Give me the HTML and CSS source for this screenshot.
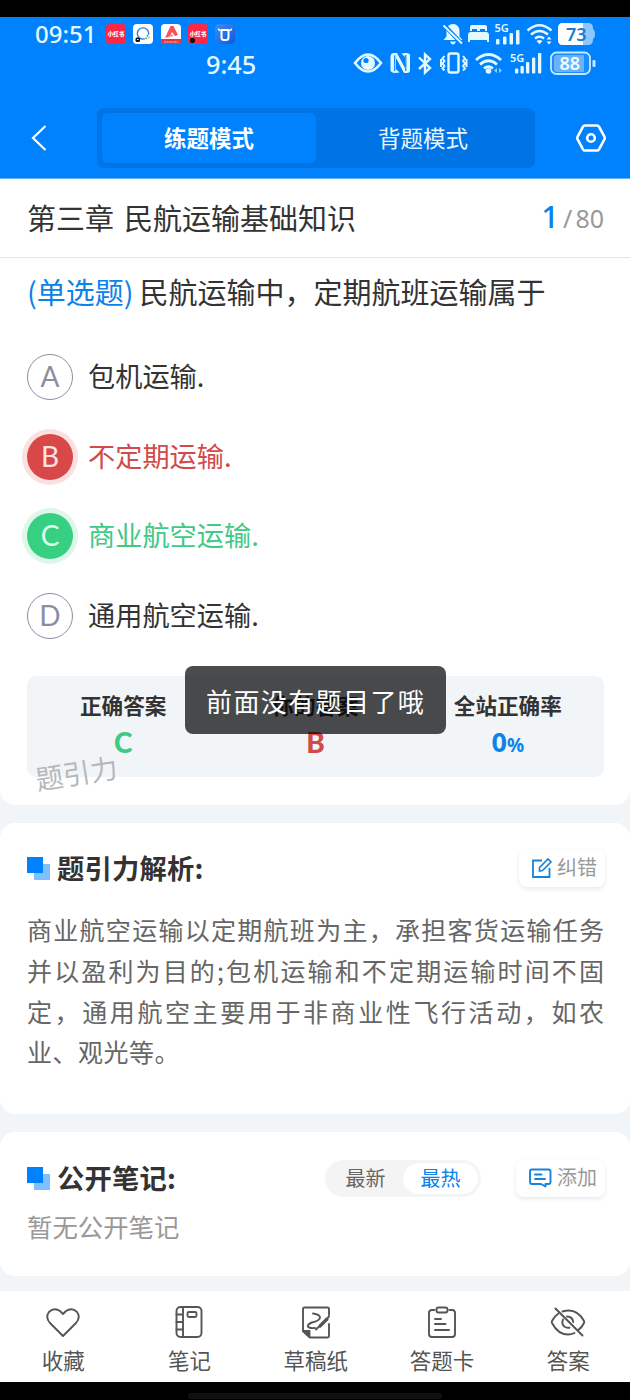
FILE: index.html
```html
<!DOCTYPE html>
<html lang="zh-CN">
<head>
<meta charset="utf-8">
<title>练题模式</title>
<link rel="stylesheet" href="styles.css">
</head>
<body>
<div class="phone">
  <div class="bezel-top"></div>
  <header class="header">
    <div class="status status-outer">
      <span class="clock clock-outer">09:51</span>
      <div class="apps">
        <span class="app app-red">小红书</span>
        <span class="app app-white"><svg width="20" height="20" viewBox="0 0 20 20" fill="none"><circle cx="10" cy="9.500" r="5.700" stroke="#2e7fd0" stroke-width="1.300"/><circle cx="14.500" cy="13.500" r="3" fill="#fff"/><path d="M14.500 11v1.500" stroke="#2e7fd0" stroke-width="1.600"/><path d="M12.500 13.500l1.500 1.500" stroke="#56b553" stroke-width="1.600"/><path d="M15.500 13l1 1" stroke="#f2b630" stroke-width="1.800"/><rect x="2.500" y="13.500" width="4.500" height="4.500" rx="1.500" fill="#111"/><path d="M4 15.500h1.500" stroke="#fff"/></svg></span>
        <span class="app app-white"><svg width="20" height="20" viewBox="0 0 20 20"><path d="M9.500 2h3l4.500 9-3 1-3-4-2 4-5 2z" fill="#f0545c"/><path d="M5 14l6-4 1.500 2z" fill="#f88"/><path d="M0 15h20v2a3 3 0 0 1-3 3H3a3 3 0 0 1-3-3z" fill="#e8333f"/><path d="M3 18h14" stroke="#ffb9bd" stroke-dasharray="2 .5"/></svg></span>
        <span class="app app-red">小红书<i class="badge"></i></span>
        <span class="app app-blue"><svg width="20" height="20" viewBox="0 0 20 20" fill="none" stroke="#fff"><path d="M6.500 6v7.500q0 2.500 2.500 2.500h2q2.500 0 2.500-2.500V6z" stroke-width="2"/><path d="M3.500 4.500q0 2 2 2M16.500 4.500q0 2-2 2" stroke-width="1.500"/></svg></span>
      </div>
      <div class="status-icons">
        <svg width="26" height="33" viewBox="440 17 26 33"><path d="M453 24c-4 0-6.500 3-6.500 7v5.500l-3 3.500h19l-3-3.500V31c0-4-2.500-7-6.500-7zM450 41.500h6q-1 3-3 3t-3-3z" fill="#e4f8ff"/><path d="M444 25l18 19" stroke="#0081fe" stroke-width="4"/><path d="M443.500 25.500l18.500 18" stroke="#e4f8ff" stroke-width="2"/></svg>
        <svg width="26" height="33" viewBox="466 17 26 33" fill="#e4f8ff"><path d="M470 31v-4q0-2 2-2h13q2 0 2 2v4h-2v-2h-5v2h-3v-2h-5v2zM468 42v-7q0-3 3-3h15q3 0 3 3v7h-2v-2h-17v2z"/></svg>
        <svg width="30" height="33" viewBox="492 17 30 33" fill="#e4f8ff"><text class="net" x="494.500" y="32">5G</text><rect x="496" y="39" width="3.500" height="5.500" rx="1"/><rect x="503" y="36.500" width="3.500" height="8" rx="1"/><rect x="509.500" y="33" width="3.500" height="11.500" rx="1"/><rect x="516" y="30" width="3.500" height="14.500" rx="1"/></svg>
        <svg width="33" height="33" viewBox="522 17 33 33" fill="none" stroke="#e4f8ff" stroke-width="2.600"><path d="M527.500 30.500q12-10.500 24 0M531 34.500q8.500-7 17 0M535 38.500q4.500-3.500 9 0"/><path d="M536.500 41l3 3.300 3-3.300q-3-2-6 0z" fill="#e4f8ff" stroke="none"/><path d="M546.500 39.500h5l-2.500-3zM546.500 41.500h5l-2.500 3z" fill="#e4f8ff" stroke="none"/></svg>
        <svg width="42" height="33" viewBox="555 17 42 33"><path d="M563 23h25q5 0 5 5v1q2 1 2 5t-2 5v1q0 5-5 5h-25q-5 0-5-5V28q0-5 5-5z" fill="#8cc7ff"/><path d="M563 23h20v22h-20q-5 0-5-5V28q0-5 5-5z" fill="#fff"/><text class="level" x="566" y="40.500" fill="#1c7bd5">73</text></svg>
      </div>
    </div>
    <div class="status status-inner">
      <span class="clock clock-inner">9:45</span>
      <div class="status-icons">
        <svg width="36" height="28" viewBox="350 50 36 28"><path d="M355 63q13-17 26 0-13 17-26 0z" fill="none" stroke="#e4f8ff" stroke-width="2.600"/><circle cx="368" cy="63" r="7" fill="#e4f8ff"/><circle cx="366" cy="60.500" r="2.600" fill="#0081fe"/></svg>
        <svg width="28" height="28" viewBox="386 50 28 28"><path d="M394 53h3l8 15V57l-3.500-3.500q6-1 8 .5 1 1 .5 3v13q0 3-3 3h-3l-8-15v11l3.500 3.500q-6 1-8-.5-1.500-1-1-3V57q0-4 3.500-4z" fill="#e4f8ff"/><path d="M394.700 55.500v15.500M405.800 55v16" stroke="#0081fe" stroke-width="1.200"/></svg>
        <svg width="22" height="28" viewBox="414 50 22 28" fill="none" stroke="#e4f8ff" stroke-width="2.400"><path d="M419 57.500l11 10.500-5 4.500v-18l5 4.500-11 10"/></svg>
        <svg width="35" height="28" viewBox="436 50 35 28" fill="none" stroke="#e4f8ff" stroke-width="2.400"><rect x="448.500" y="53.500" width="10" height="19" rx="2"/><path d="M444.500 56l-2 2.500 2 2.500-2 2.500 2 2.500-2 2.500 2 2M463 56l2 2.500-2 2.500 2 2.500-2 2.500 2 2.500-2 2M441 59v8M466.500 59v8" stroke-width="2"/></svg>
        <svg width="35" height="28" viewBox="471 50 35 28" fill="none" stroke="#e4f8ff" stroke-width="2.700"><path d="M476 60q12.500-11 25 0M480 64.500q8.500-7.500 17 0M484 68.500q4.500-3.500 9 0"/><circle cx="488.500" cy="71" r="2.800" fill="#e4f8ff" stroke="none"/><path d="M497 68v5l-3-2.500zM499 68v5l3-2.500z" fill="#8dd3ff" stroke="none"/></svg>
        <svg width="39" height="28" viewBox="506 50 39 28" fill="#e4f8ff"><text class="net" x="510" y="62">5G</text><rect x="515" y="68.500" width="3.300" height="5" rx="1"/><rect x="520.500" y="66" width="3.300" height="7.500" rx="1"/><rect x="526" y="62" width="3.300" height="11.500" rx="1"/><rect x="532" y="57.500" width="3.300" height="16" rx="1"/><rect x="538" y="53" width="3.300" height="20.500" rx="1"/></svg>
        <svg width="52" height="28" viewBox="545 50 52 28"><rect x="551" y="52.500" width="39" height="21.500" rx="5.500" fill="#1c8cff" stroke="#c3eaff" stroke-width="1.800"/><path d="M557 55h27v17h-27q-3 0-3-3V58q0-3 3-3z" fill="#68b4fb"/><rect x="592.500" y="60" width="3" height="7" rx="1" fill="#c3eaff"/><text class="level" x="559.500" y="70" fill="#f0ffff">88</text></svg>
      </div>
    </div>
    <nav class="nav">
      <svg class="back" width="18" height="30" viewBox="0 0 18 30" fill="none" stroke="#fff" stroke-width="2.200"><path d="M15.500 3L3 15l12.500 12"/></svg>
      <div class="modes">
        <span class="mode mode-on">练题模式</span>
        <span class="mode">背题模式</span>
      </div>
      <svg class="gear" width="34" height="32" viewBox="0 0 34 32" fill="none" stroke="#fff" stroke-width="2.600" stroke-linejoin="round"><path d="M11 3.500h12q1.300 0 2 1.200L30.500 14.800q.7 1.200 0 2.400L25 27.300q-.7 1.200-2 1.200H11q-1.300 0-2-1.200L3.500 17.200q-.7-1.200 0-2.400L9 4.700q.7-1.200 2-1.200z"/><circle cx="17" cy="16" r="3.800"/></svg>
    </nav>
  </header>

  <main class="content">
    <section class="card card-question">
      <div class="chapter"><span class="chapter-name">第三章 民航运输基础知识</span><span class="count"><b>1</b><em>/</em>80</span></div>
      <div class="question"><span class="kind">(单选题)</span>民航运输中，定期航班运输属于</div>
      <ul class="options">
        <li class="option"><span class="key">A</span><span class="label">包机运输.</span></li>
        <li class="option option-wrong"><span class="key">B</span><span class="label">不定期运输.</span></li>
        <li class="option option-right"><span class="key">C</span><span class="label">商业航空运输.</span></li>
        <li class="option"><span class="key">D</span><span class="label">通用航空运输.</span></li>
      </ul>
      <div class="result">
        <div class="cell"><span>正确答案</span><b class="green">C</b></div>
        <div class="cell"><span>你的答案</span><b class="red">B</b></div>
        <div class="cell"><span>全站正确率</span><b class="blue">0<small>%</small></b></div>
        <span class="watermark">题引力</span>
        <div class="toast">前面没有题目了哦</div>
      </div>
    </section>

    <section class="card card-explain">
      <div class="section-head">
        <i class="mark"></i><h2>题引力解析:</h2>
        <span class="button"><svg width="22" height="22" viewBox="0 0 22 22" fill="none" stroke="#1683dd" stroke-width="1.800"><path d="M11 3.500H2v16.500h16.500V11"/><path d="M8.500 14v-3.500l8.500-8.500 3 3-8.500 8.500z" stroke-width="1.600"/></svg><span>纠错</span></span>
      </div>
      <div class="explain">
        <p class="full">商业航空运输以定期航班为主，承担客货运输任务</p>
        <p class="full">并以盈利为目的;包机运输和不定期运输时间不固</p>
        <p class="full">定，通用航空主要用于非商业性飞行活动，如农</p>
        <p class="last">业、观光等。</p>
      </div>
    </section>

    <section class="card card-notes">
      <div class="section-head">
        <i class="mark"></i><h2>公开笔记:</h2>
        <div class="sort"><span>最新</span><span class="sort-on">最热</span></div>
        <span class="button button-add"><svg width="24" height="22" viewBox="0 0 24 22" fill="none" stroke="#1683dd" stroke-width="1.900" stroke-linecap="round" stroke-linejoin="round"><path d="M13 17H4q-2 0-2-2V4.500q0-2 2-2h16.500q2 0 2 2V15q0 2-2 2h-3v2.500L13 17M7 7.500h6.500M7 12h10"/></svg><span>添加</span></span>
      </div>
      <p class="empty">暂无公开笔记</p>
    </section>
  </main>

  <footer class="tabs">
    <div class="tab"><svg width="36" height="36" viewBox="0 0 36 36"><path d="M18 32L5 19q-5-6-1-11 5-5 11-1l3 3 3-3q6-4 11 1 4 5-1 11z"/></svg>收藏</div>
    <div class="tab"><svg width="36" height="36" viewBox="0 0 36 36"><rect x="5.500" y="3" width="25" height="30" rx="4"/><path d="M12 3v30M5.500 10.500H12M5.500 18H12M5.500 25.500H12"/><rect x="16.500" y="8" width="9" height="5" rx="1.500"/></svg>笔记</div>
    <div class="tab"><svg width="36" height="36" viewBox="0 0 36 36"><path d="M31 11V5q0-1.500-1.500-1.500h-23Q5 3.500 5 5v22l7 6.500h17.500q1.500 0 1.500-1.500V20"/><path d="M5 27h6.500v6z" fill="#555"/><path d="M15 9.500q7 1 7 4t-8 5q-5 2-4 4t7 1.500"/><path d="M29 15l-7 7" stroke-width="3.200"/><path d="M31 12.500l-1 1M20.500 23l-2.500 2.500"/></svg>草稿纸</div>
    <div class="tab"><svg width="36" height="36" viewBox="0 0 36 36"><path d="M10.500 6H8Q5 6 5 9v21q0 3 3 3h20q3 0 3-3V9q0-3-3-3h-2.500"/><rect x="12.500" y="3.500" width="11" height="5" rx="2"/><path d="M11 15h6M11 20h10.500M11 26h14"/></svg>答题卡</div>
    <div class="tab"><svg width="36" height="36" viewBox="0 0 36 36"><path d="M8.500 9.500Q4.500 12 2 17q-.5 1 0 2 6 11.500 16 11.500 3.500 0 6.500-1.500M12.500 7.500q14-4 21.500 9.500.5 1 0 2-2 4.500-6 7.200"/><path d="M13 15.500q-2 5 2 7.500 2 1 4.500.7M17 12.500q5.500 0 6.200 5.500"/><path d="M5.500 4.500l27 27"/></svg>答案</div>
  </footer>
  <div class="bezel-bottom"><i class="home"></i></div>
</div>
</body>
</html>
```
FILE: styles.css
```css
* { box-sizing: border-box; margin: 0; padding: 0; }
body { width: 630px; height: 1400px; overflow: hidden; background: #f1f5f8; color: #333; font-family: "Noto Sans CJK SC", sans-serif; }
i, em { font-style: normal; }
svg { display: block; flex: none; }
.phone { width: 630px; height: 1400px; display: flex; flex-direction: column; }

.bezel-top { height: 17px; background: #000; }
.header { height: 162px; background: #0081fe; border-bottom: 1px solid #66b3fe; }
.status { display: flex; align-items: center; color: #e4f8ff; }
.status-outer { height: 33px; padding-left: 35px; }
.status-inner { height: 28px; padding-left: 206px; }
.status-icons { display: flex; margin-left: auto; margin-right: 33px; }
.clock { font-family: "Noto Sans", sans-serif; font-weight: 500; line-height: 28px; white-space: nowrap; }
.clock-outer { width: 71px; font-size: 24px; }
.clock-inner { font-size: 25.300px; }
.net { font: 600 11px "Noto Sans", sans-serif; }
.level { font: 600 18px "Noto Sans", sans-serif; }
.apps { display: flex; gap: 7.300px; }
.app { position: relative; width: 20px; height: 20px; border-radius: 4px; display: flex; align-items: center; justify-content: center; font-size: 5.500px; font-weight: 900; line-height: 8px; white-space: nowrap; color: #fff; }
.app-red { background: #fb2744; }
.app-white { background: #fff; }
.app-blue { background: linear-gradient(135deg, #3c8df6, #1058dc); }
.badge { position: absolute; left: 2px; bottom: 1px; width: 5px; height: 5px; border-radius: 2px; background: #111; }

.nav { display: flex; align-items: center; height: 60px; margin-top: 30px; padding: 0 22px 0 30px; }
.modes { display: flex; width: 438px; height: 60px; margin-left: 49px; padding: 5px; border-radius: 7px; background: #0074e5; }
.mode { flex: 1; display: flex; align-items: center; justify-content: center; padding-bottom: 3px; border-radius: 6px; font-size: 22.500px; line-height: 30px; color: #e8f7ff; }
.mode-on { background: #0081fe; color: #fff; font-weight: 700; }
.gear { margin-left: auto; }

.content { display: flex; flex-direction: column; gap: 18px; height: 1112px; }
.card { background: #fff; border-radius: 15px; }
.card-question { height: 626px; border-radius: 0 0 15px 15px; }
.chapter { display: flex; align-items: center; justify-content: space-between; height: 79px; padding: 0 26px 3px 27px; border-bottom: 1px solid #e5e5e5; font-size: 29px; line-height: 40px; }
.chapter-name { word-spacing: 3.500px; }
.count { display: flex; align-items: baseline; padding-top: 1px; color: #999; font-family: "Noto Sans", sans-serif; font-size: 25px; }
.count b { color: #0c82ea; font-size: 31px; font-weight: 500; }
.count em { margin: 0 3px 0 4px; }
.question { height: 79px; padding: 13px 27px 0; font-size: 29px; line-height: 40px; white-space: nowrap; }
.kind { margin-right: 6px; color: #0c82ea; }
.options { list-style: none; }
.option { display: flex; align-items: center; height: 79.700px; padding: 0 27px; font-size: 27.200px; line-height: 40px; }
.label { padding-bottom: 4px; }
.key { display: flex; align-items: center; justify-content: center; width: 46px; height: 46px; margin-right: 15px; padding-bottom: 2px; border: 1.500px solid #8b8e9f; border-radius: 50%; font-family: Lato, sans-serif; font-size: 28px; color: #8b8e9f; }
.option-wrong { color: #d14b4b; }
.option-wrong .key { border: 0; background: #d94848; color: #ffe3e3; box-shadow: 0 0 0 5px #fae0e0; }
.option-right { color: #41c985; }
.option-right .key { border: 0; background: #37d083; color: #dcffec; box-shadow: 0 0 0 5px #def7ea; }
.result { position: relative; display: flex; width: 577px; height: 101px; margin: 20px 0 0 27px; border-radius: 9px; background: #f1f5f8; }
.cell { flex: 1; display: flex; flex-direction: column; align-items: center; padding-top: 13px; font-size: 21.600px; font-weight: 700; line-height: 32px; }
.cell b { font-family: Lato, sans-serif; font-size: 28px; font-weight: 900; line-height: 42px; }
.cell .blue { font-family: "Noto Sans", sans-serif; font-size: 27px; font-weight: 700; }
.cell small { font-size: 19px; }
.green { color: #3dca86; }
.red { color: #d14b4b; }
.blue { color: #0c82ea; }
.watermark { position: absolute; left: 8px; top: 77px; font-size: 27.500px; line-height: 38px; color: #b6b8bb; transform: rotate(-9deg); }
.toast { position: absolute; left: 158px; top: -10px; width: 261px; height: 68px; padding-left: 21px; border-radius: 8px; background: rgba(0, 0, 0, .7); color: #fff; font-size: 26px; line-height: 69px; letter-spacing: 1.400px; white-space: nowrap; }

.card-explain { height: 291px; padding-top: 25px; }
.section-head { display: flex; align-items: center; height: 40px; padding: 0 25px 0 27px; }
.mark { width: 23px; height: 23px; margin-right: 7px; background: linear-gradient(#0081fe, #0081fe) 0 0 / 16px 16px no-repeat, linear-gradient(#7fc0fe, #7fc0fe) 7px 7px / 16px 16px no-repeat; }
h2 { padding-bottom: 3px; font-size: 27.300px; font-weight: 700; line-height: 40px; letter-spacing: .200px; }
.button { display: flex; align-items: center; gap: 4px; height: 37px; margin-left: auto; padding: 0 8px 0 12px; border-radius: 8px; background: #fff; box-shadow: 0 2px 5px rgba(0, 0, 0, .09); font-size: 20px; line-height: 30px; color: #999; }
.button span { padding-bottom: 2px; }
.explain { padding: 21px 26px 0 27px; font-size: 25px; line-height: 40.800px; color: #666; }
.full { text-align: justify; text-align-last: justify; }
.last { letter-spacing: .5px; }

.card-notes { height: 144px; padding-top: 26px; }
.sort { display: flex; align-items: center; width: 156px; height: 37px; margin-left: auto; padding: 3px; border-radius: 19px; background: #f4f4f4; font-size: 20px; line-height: 29px; color: #666; }
.sort span { width: 75px; height: 31px; text-align: center; }
.sort .sort-on { border-radius: 16px; background: #fff; color: #0c82ea; }
.button-add { margin-left: 35px; gap: 5px; }
.empty { padding: 8px 27px; font-size: 25.400px; line-height: 40px; color: #999; }

.tabs { display: grid; grid-template-columns: repeat(5, 126.300px); height: 91px; background: #fff; }
.tab { display: flex; flex-direction: column; align-items: center; padding-top: 13px; font-size: 21.500px; line-height: 38px; gap: 1px; color: #555; }
.tab svg { fill: none; stroke: #555; stroke-width: 1.900px; stroke-linejoin: round; stroke-linecap: round; }
.bezel-bottom { display: flex; justify-content: center; height: 18px; padding-top: 11px; background: #000; }
.home { width: 254px; height: 6px; border-radius: 3px; background: #111; }
```
